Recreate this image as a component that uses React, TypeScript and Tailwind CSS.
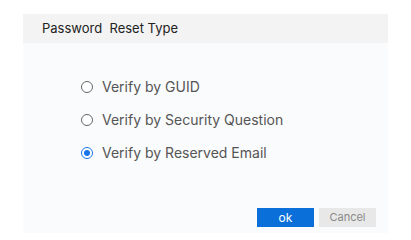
import { useState } from "react";

const OPTIONS = [
  { id: "guid", label: "Verify by GUID" },
  { id: "question", label: "Verify by Security Question" },
  { id: "email", label: "Verify by Reserved Email" },
];

export default function App() {
  const [selected, setSelected] = useState("email");

  return (
    <div
      className="h-[239px] w-[411px] bg-white pl-[23px] pt-[14px]"
      style={{ fontFamily: "Inter, 'Noto Sans', sans-serif" }}
    >
      <div className="flex h-[219px] w-[365px] flex-col bg-[#fafbfc]">
        <div className="flex h-[29px] items-center bg-[#f3f3f3] pl-[19px] text-[13px] text-[#222]">
          Password&nbsp; Reset Type
        </div>

        <div className="flex flex-col gap-[14px] pl-[58px] pt-[34px]">
          {OPTIONS.map((opt) => {
            const checked = selected === opt.id;
            return (
              <label
                key={opt.id}
                className="flex h-[19px] cursor-pointer items-center gap-[9px] text-[14px] text-[#555]"
                onClick={() => setSelected(opt.id)}
              >
                <span
                  className={
                    checked
                      ? "flex h-[12px] w-[12px] items-center justify-center rounded-full border border-[#1a73e8] bg-white"
                      : "flex h-[12px] w-[12px] items-center justify-center rounded-full border border-[#666] bg-white"
                  }
                >
                  {checked && <span className="h-[6px] w-[6px] rounded-full bg-[#1a73e8]" />}
                </span>
                {opt.label}
              </label>
            );
          })}
        </div>

        <div className="mt-auto flex justify-end gap-[5px] pb-[6px] pr-[12px]">
          <button className="h-[19px] w-[57px] bg-[#0b6fd9] text-[12px] text-white">ok</button>
          <button className="h-[19px] w-[57px] bg-[#e8e8e8] text-[11px] text-[#888]">Cancel</button>
        </div>
      </div>
    </div>
  );
}
